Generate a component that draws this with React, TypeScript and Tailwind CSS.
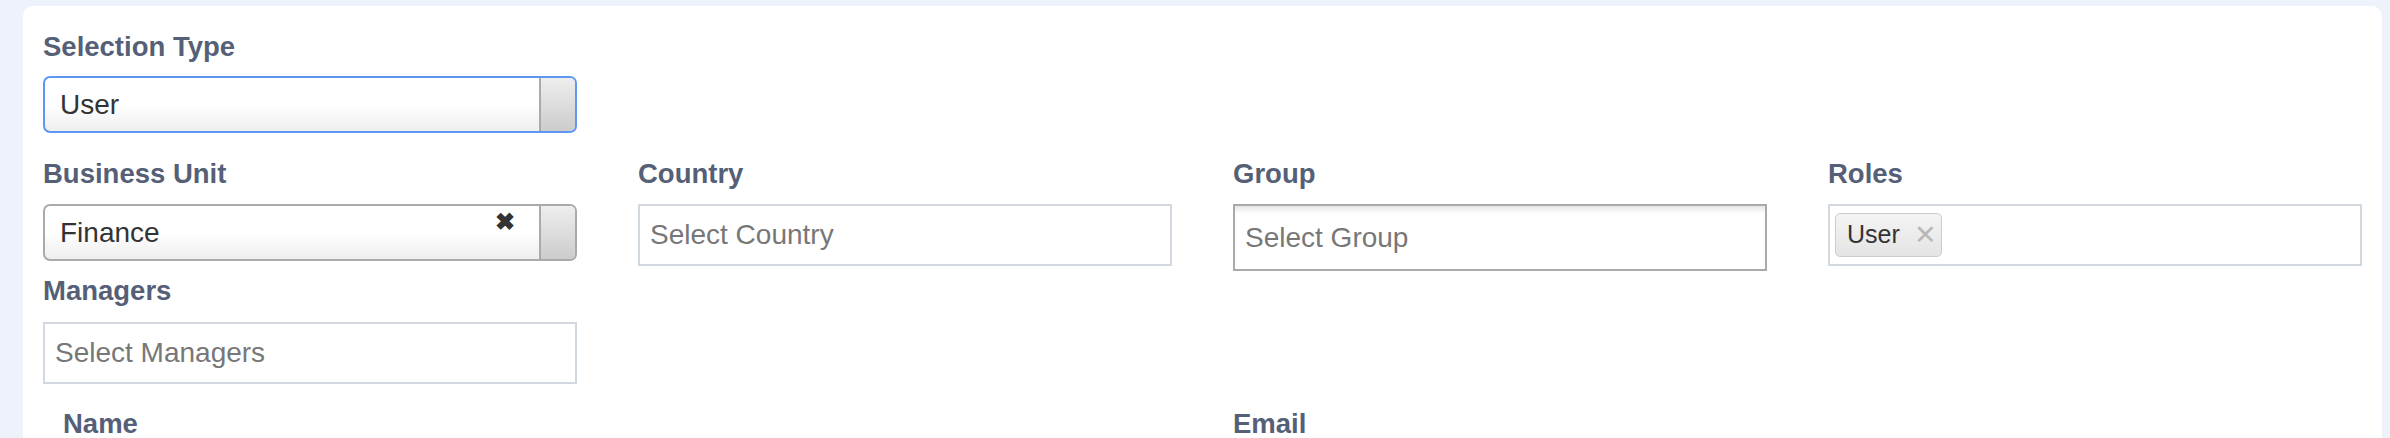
import { ReactNode } from "react"

const font = { fontFamily: '"Liberation Sans", Arial, sans-serif' }

function Label({ children, className = "" }: { children: ReactNode; className?: string }) {
  return (
    <div className={`text-[27.5px] leading-[32px] font-bold text-[#555f77] ${className}`}>{children}</div>
  )
}

function ArrowCell() {
  return (
    <div className="w-[36px] h-full border-l-2 border-[#aaaaaa] bg-gradient-to-b from-[#eeeeee] to-[#cccccc] rounded-r-[5px]" />
  )
}

function SingleSelect({
  value,
  focused,
  clearable,
}: {
  value: string
  focused?: boolean
  clearable?: boolean
}) {
  return (
    <div
      className={`w-[534px] h-[57px] flex items-stretch rounded-[7px] bg-gradient-to-b from-white from-50% to-[#eeeeee] border-2 ${
        focused ? "border-[#5d97f2]" : "border-[#aaaaaa]"
      }`}
    >
      <div className="flex-1 relative flex items-center pl-[15px] text-[28px] text-[#333333]">
        {value}
        {clearable && (
          <span className="absolute right-[24px] top-[4px] text-[24px] leading-[24px] font-bold text-[#333333]">
            ✖
          </span>
        )}
      </div>
      <ArrowCell />
    </div>
  )
}

function Placeholder({ text, h = "h-[62px]", dark }: { text: string; h?: string; dark?: boolean }) {
  return (
    <div
      className={`w-[534px] ${h} flex items-center pl-[10px] bg-white text-[28px] text-[#777777] ${
        dark
          ? "border-2 border-[#aaaaaa] shadow-[inset_0_7px_6px_-4px_rgba(0,0,0,0.12)]"
          : "border-2 border-[#d2d8e0]"
      }`}
    >
      {text}
    </div>
  )
}

function Chip({ text }: { text: string }) {
  return (
    <div className="h-[44px] w-[107px] flex items-center gap-[14px] pl-[11px] rounded-[5px] border border-[#cccccc] bg-gradient-to-b from-[#f4f4f4] to-[#e4e4e4] text-[25px] text-[#333333]">
      <span>{text}</span>
      <span className="text-[#b8b8b8] text-[27px] leading-none">✕</span>
    </div>
  )
}

export default function App() {
  return (
    <div className="w-[2390px] h-[438px] overflow-hidden bg-[#eef3fb] pl-[23px] pt-[6px] pr-[8px]" style={font}>
      <div className="bg-white rounded-t-[10px] h-[500px] pl-[20px] pt-[25px]">
        <Label>Selection Type</Label>
        <div className="mt-[13px]">
          <SingleSelect value="User" focused />
        </div>

        <div className="mt-[25px] flex gap-[61px]">
          <div className="flex flex-col">
            <Label>Business Unit</Label>
            <div className="mt-[14px]">
              <SingleSelect value="Finance" clearable />
            </div>
          </div>
          <div className="flex flex-col">
            <Label>Country</Label>
            <div className="mt-[14px]">
              <Placeholder text="Select Country" />
            </div>
          </div>
          <div className="flex flex-col">
            <Label>Group</Label>
            <div className="mt-[14px]">
              <Placeholder text="Select Group" h="h-[67px]" dark />
            </div>
          </div>
          <div className="flex flex-col">
            <Label>Roles</Label>
            <div className="mt-[14px] w-[534px] h-[62px] border-2 border-[#d2d8e0] pl-[5px] pt-[7px]">
              <Chip text="User" />
            </div>
          </div>
        </div>

        <Label className="mt-[4px]">Managers</Label>
        <div className="mt-[15px]">
          <Placeholder text="Select Managers" />
        </div>

        <div className="mt-[24px] flex">
          <Label className="w-[1190px] pl-[20px]">Name</Label>
          <Label>Email</Label>
        </div>
      </div>
    </div>
  )
}
